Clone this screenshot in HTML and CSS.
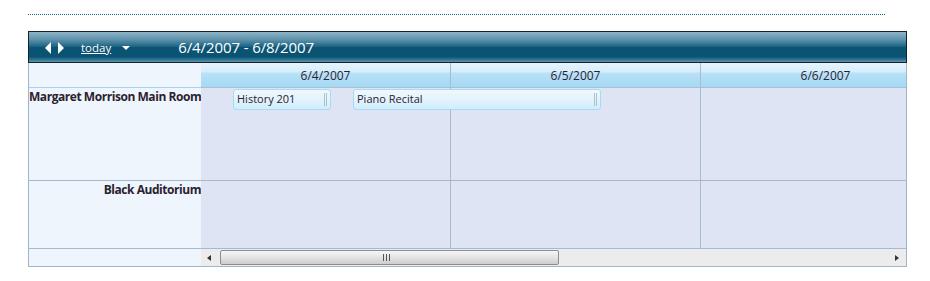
FILE: index.html
```html
<!DOCTYPE html>
<html lang="en">
<head>
    <meta charset="UTF-8">
    <title>Scheduler</title>
    <link rel="stylesheet" href="styles.css">
</head>
<body>
    <div class="page">
        <div class="rule"></div>

        <div class="scheduler">
            <div class="toolbar">
                <span class="nav">
                    <svg width="22" height="12" viewBox="0 0 22 12">
                        <path d="M6 0 L0 6 L6 12 Z" fill="#fff"/>
                        <path d="M13 0 L19 6 L13 12 Z" fill="#fff"/>
                    </svg>
                </span>
                <a class="today" href="#">today</a>
                <span class="drop">
                    <svg width="8" height="4" viewBox="0 0 8 4"><path d="M0 0 L8 0 L4 4 Z" fill="#fff"/></svg>
                </span>
                <span class="range">6/4/2007 - 6/8/2007</span>
            </div>

            <div class="grid">
                <div class="corner"></div>
                <div class="lane dates">
                    <div class="date">6/4/2007</div>
                    <div class="date">6/5/2007</div>
                    <div class="date">6/6/2007</div>
                </div>

                <div class="resource">Margaret Morrison Main Room</div>
                <div class="lane slots tall">
                    <div class="slot"></div>
                    <div class="slot"></div>
                    <div class="slot"></div>
                    <div class="event history">History 201<span class="grip"></span></div>
                    <div class="event recital">Piano Recital<span class="grip"></span></div>
                </div>

                <div class="resource">Black Auditorium</div>
                <div class="lane slots short">
                    <div class="slot"></div>
                    <div class="slot"></div>
                    <div class="slot"></div>
                </div>

                <div class="corner bottom"></div>
                <div class="scrollbar">
                    <span class="arrow left"></span>
                    <div class="track">
                        <div class="thumb"><span class="lines"></span></div>
                    </div>
                    <span class="arrow right"></span>
                </div>
            </div>
        </div>
    </div>
</body>
</html>
```

FILE: styles.css
```css
body {
    margin: 0;
    font-family: 'Open Sans', 'Noto Sans', sans-serif;
    background: #ffffff;
    color: #2b2230;
}

.page {
    padding: 14px 0 0 28px;
}

.rule {
    width: 857px;
    border-top: 1px dotted #166c7c;
    margin-bottom: 16px;
}

.scheduler {
    width: 877px;
    border: 1px solid #9db7c9;
    border-top: none;
}

/* barre du haut */
.toolbar {
    height: 30px;
    margin: 0 -1px;
    border: 1px solid #14232c;
    background: linear-gradient(to bottom, #8db3c6 0%, #5f93ab 25%, #1d6585 48%, #0b5373 52%, #0b5373 82%, #2f7593 92%, #5c93ab 100%);
    display: flex;
    align-items: center;
    color: #ffffff;
}

.nav {
    display: flex;
    margin-left: 16px;
    margin-top: 1px;
}

.today {
    color: #ffffff;
    font-size: 11.5px;
    margin-left: 14px;
    text-decoration: underline;
}

.drop {
    display: flex;
    margin-left: 11px;
    margin-top: 1px;
}

.range {
    font-size: 15px;
    margin-left: 48px;
    letter-spacing: -0.1px;
}

/* grille */
.grid {
    display: grid;
    grid-template-columns: 172px 705px;
    background: #eef5fc;
}

.corner {
    height: 24px;
    border-bottom: 1px solid #a9d3ee;
}

.corner.bottom {
    height: 17px;
    border-bottom: none;
}

.lane {
    display: flex;
    overflow: hidden;
    position: relative;
}

.dates {
    height: 24px;
    border-bottom: 1px solid #a8c0d0;
}

.date {
    flex: 0 0 249px;
    border-right: 1px solid #a8bccb;
    background: linear-gradient(to bottom, #e6f3fc 0%, #d7eefb 35%, #b6e0f7 45%, #a6d9f5 100%);
    font-size: 12px;
    text-align: center;
    line-height: 25px;
}

.resource {
    font-size: 12px;
    font-weight: bold;
    text-align: right;
    border-bottom: 1px solid #a3bbcc;
    letter-spacing: -0.45px;
    white-space: nowrap;
    line-height: 18px;
}

.tall {
    height: 92px;
}

.short {
    height: 67px;
}

.slots {
    border-bottom: 1px solid #a3bbcc;
}

.slot {
    flex: 0 0 249px;
    border-right: 1px solid #a8bccb;
    background: #dfe4f4;
}

.event {
    position: absolute;
    top: 1px;
    height: 21px;
    box-sizing: border-box;
    border: 1px solid #a3dcf8;
    border-radius: 3px;
    background: linear-gradient(to bottom, #eff8fe 0%, #e2f3fd 50%, #d2edfb 100%);
    font-size: 11px;
    line-height: 18px;
    padding-left: 3px;
}

.history {
    left: 32px;
    width: 98px;
}

.recital {
    left: 152px;
    width: 248px;
}

.grip {
    position: absolute;
    right: 3px;
    top: 3px;
    width: 3px;
    height: 13px;
    border-left: 1px solid #b0c0c8;
    border-right: 1px solid #b0c0c8;
    box-sizing: border-box;
}

/* barre de defilement */
.scrollbar {
    height: 17px;
    display: flex;
    align-items: center;
    background: #ececec;
}

.arrow {
    width: 0;
    height: 0;
    border-top: 3px solid transparent;
    border-bottom: 3px solid transparent;
}

.arrow.left {
    border-right: 4px solid #333;
    margin: 0 8px 0 6px;
}

.arrow.right {
    border-left: 4px solid #333;
    margin: 0 7px 0 8px;
}

.track {
    flex: 1;
    height: 15px;
    display: flex;
    align-items: center;
}

.thumb {
    width: 339px;
    height: 15px;
    box-sizing: border-box;
    border: 1px solid #8e8e8e;
    border-radius: 2px;
    background: linear-gradient(to bottom, #f6f6f6 0%, #e4e4e4 50%, #cdcdcd 100%);
    display: flex;
    justify-content: center;
    align-items: center;
    margin-left: 1px;
}

.lines {
    width: 7px;
    height: 7px;
    background: repeating-linear-gradient(to right, #555 0px, #555 1px, transparent 1px, transparent 3px);
    margin-right: 6px;
}
```
